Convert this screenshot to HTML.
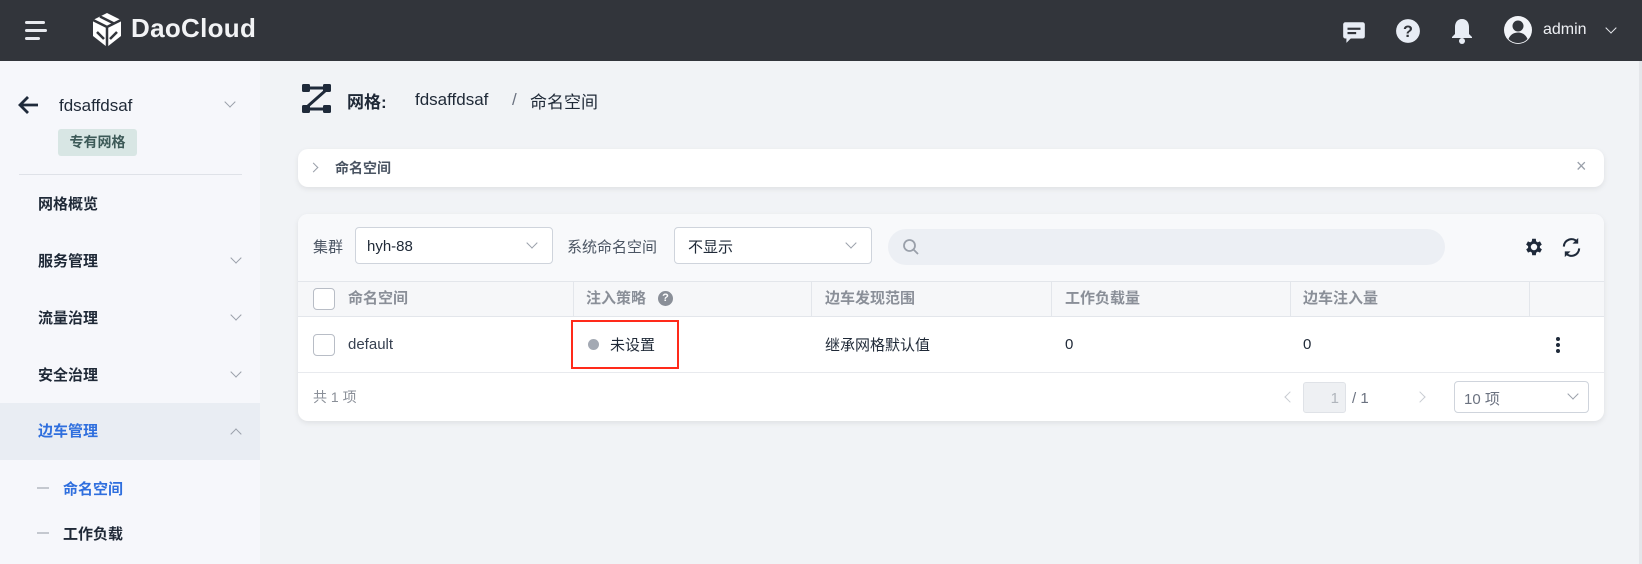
<!DOCTYPE html>
<html><head><meta charset="utf-8"><style>
*{box-sizing:border-box;margin:0;padding:0}
body{width:1642px;height:564px;overflow:hidden;background:#f1f3f6;font-family:"Liberation Sans","Noto Sans CJK SC",sans-serif;color:#1f2937;font-size:15px;position:relative}
.a{position:absolute}
.hdr{left:0;top:0;width:1642px;height:61px;background:#32353b}
.side{left:0;top:61px;width:260px;height:503px;background:#f6f7fb}
.mi{left:38px;font-size:15px;font-weight:bold;color:#1f2937}
.chev{width:8px;height:8px;border-right:1.5px solid #9aa0aa;border-bottom:1.5px solid #9aa0aa;transform:rotate(45deg)}
.card{background:#fff;border-radius:10px;box-shadow:0 2px 6px rgba(0,0,0,.08)}
.sel{border:1px solid #cfd4dc;border-radius:4px;background:#fff;height:37px}
.th{font-size:15px;color:#8a8f98;font-weight:bold;top:287px}
.vl{width:1px;background:#e3e6eb;top:281px;height:36px}
.cb{width:22px;height:22px;border:1px solid #b8bdc6;border-radius:4px;background:#fff}
</style></head><body>
<div class="a hdr"></div>
<div class="a" style="left:25px;top:21px;width:20px;height:3px;background:#e8eaef;border-radius:2px"></div>
<div class="a" style="left:25px;top:29px;width:22px;height:3px;background:#e8eaef;border-radius:2px"></div>
<div class="a" style="left:25px;top:37px;width:15px;height:3px;background:#e8eaef;border-radius:2px"></div>
<svg class="a" style="left:90px;top:12px" width="34" height="36" viewBox="0 0 34 36"><path d="M17 1 L31 8 L31 24 L17 35 L3 24 L3 8 Z" fill="#fff"/><path d="M3 8 L17 15 L31 8 M17 15 L17 35 M10 4.5 L24 11.5" stroke="#32353b" stroke-width="2.5" fill="none"/><path d="M7 20 L14 27 M27 20 L20 27" stroke="#32353b" stroke-width="2.5"/></svg>
<div class="a" style="left:131px;top:13px;font-size:26px;font-weight:bold;color:#f2f3f5;letter-spacing:0.3px">DaoCloud</div>
<svg class="a" style="left:1341px;top:19px" width="26" height="26" viewBox="0 0 24 24"><path d="M4 3h16a2 2 0 0 1 2 2v11a2 2 0 0 1-2 2H9l-4 4v-4H4a2 2 0 0 1-2-2V5a2 2 0 0 1 2-2z" fill="#e8edf5"/><rect x="6" y="8" width="12" height="2" fill="#32353b"/><rect x="6" y="12" width="8" height="2" fill="#32353b"/></svg>
<svg class="a" style="left:1395px;top:18px" width="26" height="26" viewBox="0 0 24 24"><circle cx="12" cy="12" r="11" fill="#e8edf5"/><text x="12" y="17.5" text-anchor="middle" font-size="15" font-weight="bold" font-family="Liberation Sans" fill="#32353b">?</text></svg>
<svg class="a" style="left:1450px;top:17px" width="24" height="28" viewBox="0 0 24 28"><path d="M12 2c-5 0-7 4-7 8v7l-3 3v1h20v-1l-3-3v-7c0-4-2-8-7-8z" fill="#e8edf5"/><circle cx="12" cy="24" r="3" fill="#e8edf5"/></svg>
<svg class="a" style="left:1503px;top:15px" width="30" height="30" viewBox="0 0 30 30"><circle cx="15" cy="15" r="14" fill="#f2f4f8"/><circle cx="15" cy="11" r="5.5" fill="#32353b"/><path d="M5.5 24c2-5 6-6.5 9.5-6.5s7.5 1.5 9.5 6.5a13 13 0 0 1-19 0z" fill="#32353b"/></svg>
<div class="a" style="left:1543px;top:21px;font-size:16px;color:#eef0f4">admin</div>
<div class="a chev" style="left:1607px;top:24px;border-color:#e8eaef;width:8px;height:8px"></div>

<div class="a side"></div>
<svg class="a" style="left:18px;top:95px" width="22" height="20" viewBox="0 0 22 20"><path d="M20 10H3M10 2L2 10l8 8" stroke="#1f2a3a" stroke-width="2.8" fill="none"/></svg>
<div class="a" style="left:59px;top:96px;font-size:17px;color:#1f2937">fdsaffdsaf</div>
<div class="a chev" style="left:226px;top:98px"></div>
<div class="a" style="left:58px;top:129px;width:79px;height:27px;background:#d8e6e4;border-radius:3px;font-size:14px;font-weight:bold;color:#3d5a58;text-align:center;line-height:27px">专有网格</div>
<div class="a" style="left:19px;top:174px;width:223px;height:1px;background:#dfe2e8"></div>
<div class="a mi" style="top:193px">网格概览</div>
<div class="a mi" style="top:250px">服务管理</div><div class="a chev" style="left:232px;top:254px"></div>
<div class="a mi" style="top:307px">流量治理</div><div class="a chev" style="left:232px;top:311px"></div>
<div class="a mi" style="top:364px">安全治理</div><div class="a chev" style="left:232px;top:368px"></div>
<div class="a" style="left:0;top:403px;width:260px;height:57px;background:#e9edf3"></div>
<div class="a mi" style="top:420px;color:#2f6fde">边车管理</div><div class="a chev" style="left:232px;top:430px;transform:rotate(225deg)"></div>
<div class="a" style="left:37px;top:487px;width:12px;height:2px;background:#c4c8cf"></div>
<div class="a mi" style="left:63px;top:478px;color:#2f6fde">命名空间</div>
<div class="a" style="left:37px;top:532px;width:12px;height:2px;background:#c4c8cf"></div>
<div class="a mi" style="left:63px;top:523px">工作负载</div>

<svg class="a" style="left:302px;top:84px" width="29" height="29" viewBox="0 0 29 29"><rect x="0" y="0" width="8" height="8" rx="1.5" fill="#1f2a3a"/><rect x="21" y="0" width="8" height="8" rx="1.5" fill="#1f2a3a"/><rect x="0" y="21" width="8" height="8" rx="1.5" fill="#1f2a3a"/><rect x="21" y="21" width="8" height="8" rx="1.5" fill="#1f2a3a"/><path d="M8 4H21M8 25H21M23 7L6 22" stroke="#1f2a3a" stroke-width="3"/></svg>
<div class="a" style="left:347px;top:88px;font-size:17px;font-weight:bold;color:#1f2937">网格:</div>
<div class="a" style="left:415px;top:90px;font-size:17px;color:#1f2937">fdsaffdsaf</div>
<div class="a" style="left:512px;top:90px;font-size:17px;color:#6b7280">/</div>
<div class="a" style="left:530px;top:88px;font-size:17px;color:#1f2937">命名空间</div>

<div class="a card" style="left:298px;top:149px;width:1306px;height:38px"></div>
<div class="a chev" style="left:310px;top:164px;transform:rotate(-45deg);width:7px;height:7px"></div>
<div class="a" style="left:335px;top:158px;font-size:14px;font-weight:bold;color:#4b5563">命名空间</div>
<div class="a" style="left:1576px;top:156px;font-size:18px;color:#9aa0aa">×</div>

<div class="a card" style="left:298px;top:214px;width:1306px;height:207px;overflow:hidden">
<div class="a" style="left:0;top:0;width:1306px;height:67px;background:#f8f9fb"></div>
<div class="a" style="left:0;top:67px;width:1306px;height:36px;background:#f6f7f9;border-top:1px solid #e3e6eb;border-bottom:1px solid #e3e6eb"></div>
<div class="a" style="left:0;top:158px;width:1306px;height:1px;background:#e8eaee"></div>
</div>
<div class="a" style="left:313px;top:236px;color:#4b5563">集群</div>
<div class="a sel" style="left:355px;top:227px;width:198px"></div>
<div class="a" style="left:367px;top:238px">hyh-88</div>
<div class="a chev" style="left:528px;top:239px"></div>
<div class="a" style="left:567px;top:236px;color:#4b5563">系统命名空间</div>
<div class="a sel" style="left:674px;top:227px;width:198px"></div>
<div class="a" style="left:688px;top:236px">不显示</div>
<div class="a chev" style="left:847px;top:239px"></div>
<div class="a" style="left:888px;top:229px;width:557px;height:36px;background:#eceff4;border-radius:18px"></div>
<svg class="a" style="left:902px;top:238px" width="18" height="18" viewBox="0 0 18 18"><circle cx="7.5" cy="7.5" r="5.5" stroke="#9aa0aa" stroke-width="1.8" fill="none"/><path d="M11.5 11.5L16 16" stroke="#9aa0aa" stroke-width="1.8"/></svg>
<svg class="a" style="left:1523px;top:236px" width="22" height="22" viewBox="0 0 24 24"><path fill="#1f2a3a" d="M19.4 13a7.5 7.5 0 0 0 0-2l2.1-1.6-2-3.5-2.5 1a7 7 0 0 0-1.7-1L15 3h-4l-.4 2.9a7 7 0 0 0-1.7 1l-2.5-1-2 3.5L6.6 11a7.5 7.5 0 0 0 0 2l-2.1 1.6 2 3.5 2.5-1a7 7 0 0 0 1.7 1L11 21h4l.4-2.9a7 7 0 0 0 1.7-1l2.5 1 2-3.5zM13 15.5a3.5 3.5 0 1 1 0-7 3.5 3.5 0 0 1 0 7z" transform="translate(-1 0)"/></svg>
<svg class="a" style="left:1560px;top:236px" width="23" height="23" viewBox="0 0 24 24"><path d="M4 11a8 8 0 0 1 14-5M20 13a8 8 0 0 1-14 5" stroke="#1f2a3a" stroke-width="2.2" fill="none"/><path d="M19 2v6h-6z M5 22v-6h6z" fill="#1f2a3a"/></svg>

<div class="a vl" style="left:573px"></div><div class="a vl" style="left:811px"></div><div class="a vl" style="left:1051px"></div><div class="a vl" style="left:1290px"></div><div class="a vl" style="left:1529px"></div>
<div class="a cb" style="left:313px;top:288px"></div>
<div class="a th" style="left:348px">命名空间</div>
<div class="a th" style="left:586px">注入策略</div>
<div class="a" style="left:658px;top:291px;width:15px;height:15px;border-radius:50%;background:#8a8f98;color:#fff;font-size:11px;font-weight:bold;text-align:center;line-height:15px">?</div>
<div class="a th" style="left:825px">边车发现范围</div>
<div class="a th" style="left:1065px">工作负载量</div>
<div class="a th" style="left:1303px">边车注入量</div>

<div class="a cb" style="left:313px;top:334px"></div>
<div class="a" style="left:348px;top:336px;color:#374151">default</div>
<div class="a" style="left:571px;top:320px;width:108px;height:49px;border:2.5px solid #ff2a1a"></div>
<div class="a" style="left:588px;top:339px;width:11px;height:11px;border-radius:50%;background:#a3a9b3"></div>
<div class="a" style="left:610px;top:334px">未设置</div>
<div class="a" style="left:825px;top:334px">继承网格默认值</div>
<div class="a" style="left:1065px;top:336px">0</div>
<div class="a" style="left:1303px;top:336px">0</div>
<div class="a" style="left:1556px;top:337px;width:4px;height:4px;border-radius:50%;background:#1f2a3a;box-shadow:0 6px 0 #1f2a3a,0 12px 0 #1f2a3a"></div>

<div class="a" style="left:313px;top:387px;font-size:14px;color:#8a8f98">共 1 项</div>
<div class="a chev" style="left:1286px;top:393px;transform:rotate(135deg);border-color:#c8ccd2"></div>
<div class="a" style="left:1303px;top:382px;width:43px;height:31px;background:#eef0f3;border:1px solid #dfe2e7;border-radius:3px;text-align:right;padding-right:6px;line-height:31px;color:#b0b5bc">1</div>
<div class="a" style="left:1352px;top:390px;color:#6b7280">/ 1</div>
<div class="a chev" style="left:1416px;top:393px;transform:rotate(-45deg);border-color:#c8ccd2"></div>
<div class="a sel" style="left:1454px;top:381px;width:135px;height:32px"></div>
<div class="a" style="left:1464px;top:388px;color:#6b7280">10 项</div>
<div class="a chev" style="left:1569px;top:390px"></div>
<div class="a" style="left:1639px;top:61px;width:3px;height:503px;background:#e4e6ea"></div>
</body></html>
